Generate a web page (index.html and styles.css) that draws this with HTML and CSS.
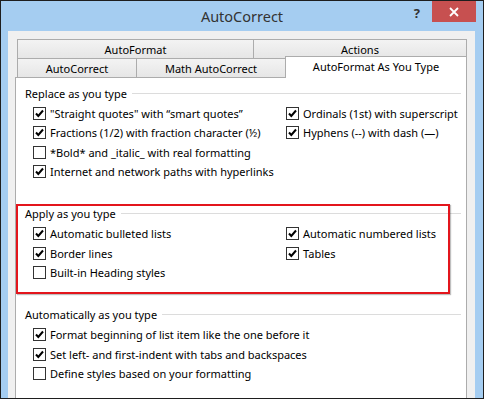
FILE: index.html
```html
<!DOCTYPE html>
<html lang="en">
<head>
  <meta charset="UTF-8">
  <title>AutoCorrect</title>
  <link rel="stylesheet" href="styles.css">
</head>
<body>
  <div class="window">
    <div class="titlebar">
      <span class="title">AutoCorrect</span>
      <div class="controls">
        <span class="help">?</span>
        <button class="close-btn" aria-label="Close">
          <svg width="10" height="10" viewBox="0 0 10 10"><path d="M1 1 L9 9 M9 1 L1 9" stroke="#fff" stroke-width="1.8" fill="none"/></svg>
        </button>
      </div>
    </div>

    <div class="client">
      <div class="tab-row">
        <div class="tab tab-autoformat">AutoFormat</div>
        <div class="tab tab-actions">Actions</div>
      </div>
      <div class="tab-row">
        <div class="tab tab-autocorrect">AutoCorrect</div>
        <div class="tab tab-math">Math AutoCorrect</div>
        <div class="tab tab-asyoutype selected">AutoFormat As You Type</div>
      </div>

      <div class="panel">
        <section class="group">
          <div class="group-title">Replace as you type</div>
          <div class="options">
            <label class="option"><span class="box"><svg viewBox="0 0 11 11"><path d="M2 5.5 L4.3 8 L9 2.5" /></svg></span>"Straight quotes" with “smart quotes”</label>
            <label class="option"><span class="box"><svg viewBox="0 0 11 11"><path d="M2 5.5 L4.3 8 L9 2.5" /></svg></span>Ordinals (1st) with superscript</label>
            <label class="option"><span class="box"><svg viewBox="0 0 11 11"><path d="M2 5.5 L4.3 8 L9 2.5" /></svg></span>Fractions (1/2) with fraction character (½)</label>
            <label class="option"><span class="box"><svg viewBox="0 0 11 11"><path d="M2 5.5 L4.3 8 L9 2.5" /></svg></span>Hyphens (--) with dash (—)</label>
            <label class="option"><span class="box"></span>*Bold* and _italic_ with real formatting</label>
            <span></span>
            <label class="option"><span class="box"><svg viewBox="0 0 11 11"><path d="M2 5.5 L4.3 8 L9 2.5" /></svg></span>Internet and network paths with hyperlinks</label>
          </div>
        </section>

        <section class="group highlight">
          <div class="group-title">Apply as you type</div>
          <div class="options">
            <label class="option"><span class="box"><svg viewBox="0 0 11 11"><path d="M2 5.5 L4.3 8 L9 2.5" /></svg></span>Automatic bulleted lists</label>
            <label class="option"><span class="box"><svg viewBox="0 0 11 11"><path d="M2 5.5 L4.3 8 L9 2.5" /></svg></span>Automatic numbered lists</label>
            <label class="option"><span class="box"><svg viewBox="0 0 11 11"><path d="M2 5.5 L4.3 8 L9 2.5" /></svg></span>Border lines</label>
            <label class="option"><span class="box"><svg viewBox="0 0 11 11"><path d="M2 5.5 L4.3 8 L9 2.5" /></svg></span>Tables</label>
            <label class="option"><span class="box"></span>Built-in Heading styles</label>
          </div>
        </section>

        <section class="group">
          <div class="group-title">Automatically as you type</div>
          <div class="options single">
            <label class="option"><span class="box"><svg viewBox="0 0 11 11"><path d="M2 5.5 L4.3 8 L9 2.5" /></svg></span>Format beginning of list item like the one before it</label>
            <label class="option"><span class="box"><svg viewBox="0 0 11 11"><path d="M2 5.5 L4.3 8 L9 2.5" /></svg></span>Set left- and first-indent with tabs and backspaces</label>
            <label class="option"><span class="box"></span>Define styles based on your formatting</label>
          </div>
        </section>
      </div>
    </div>
  </div>
</body>
</html>
```

FILE: styles.css
```css
* {
  box-sizing: border-box;
  margin: 0;
  padding: 0;
}

body {
  width: 484px;
  height: 399px;
  overflow: hidden;
  font-family: "Noto Sans", "Open Sans", sans-serif;
  font-size: 11px;
  color: #000;
}

.window {
  height: 399px;
  border: 1px solid #1e1e1e;
  background: #a5cdf1;
  display: flex;
  flex-direction: column;
  overflow: hidden;
}

/* Title bar */
.titlebar {
  height: 30px;
  flex: none;
  display: grid;
  grid-template-columns: 1fr auto 1fr;
}

.title {
  grid-column: 2;
  font-size: 14.5px;
  line-height: 30px;
  color: #333;
}

.controls {
  grid-column: 3;
  display: flex;
  justify-content: flex-end;
  align-items: flex-start;
  padding-right: 7px;
}

.help {
  font-size: 13px;
  font-weight: bold;
  line-height: 18px;
  color: #333;
  margin: 3px 12px 0 0;
}

.close-btn {
  width: 44px;
  height: 21px;
  border: none;
  background: #c75050;
  display: flex;
  align-items: center;
  justify-content: center;
}

/* Client area */
.client {
  flex: 1;
  margin: 0 8px 0 7px;
  padding: 8px 8px 0 7px;
  background: #f0f0f0;
  display: flex;
  flex-direction: column;
}

.tab-row {
  display: flex;
  align-items: flex-start;
  height: 19px;
  margin-left: 2px;
}

.tab {
  height: 19px;
  border: 1px solid #acacac;
  border-bottom: none;
  background: linear-gradient(#f3f3f3, #e6e6e6);
  text-align: center;
  line-height: 19px;
  white-space: nowrap;
}

.tab + .tab {
  margin-left: -1px;
}

.tab-autoformat { width: 237px; }
.tab-actions { width: 214px; }
.tab-autocorrect { width: 120px; }
.tab-math { width: 150px; }
.tab-asyoutype { width: 182px; }

.tab.selected {
  position: relative;
  z-index: 1;
  height: 22px;
  margin-top: -2px;
  background: #fff;
  line-height: 20px;
}

.panel {
  flex: 1;
  background: #fff;
  border: 1px solid #acacac;
  border-bottom: none;
  padding-top: 6px;
}

/* Groups */
.group {
  position: relative;
  margin-bottom: 23px;
}

.group-title {
  display: flex;
  align-items: center;
  height: 19px;
  padding: 0 5px 0 9px;
  color: #000;
}

.group-title::after {
  content: "";
  flex: 1;
  height: 1px;
  margin-left: 5px;
  background: #dcdcdc;
}

.group.highlight::before {
  content: "";
  position: absolute;
  left: 0;
  top: 0;
  width: 430px;
  height: 86px;
  border: 2px solid #e3151c;
  box-shadow: 1px 1px 1px rgba(0, 0, 0, 0.25);
}

.options {
  display: grid;
  grid-template-columns: 253px 1fr;
  grid-auto-rows: 19.3px;
  padding: 1px 0 0 17px;
}

.options.single {
  grid-template-columns: 1fr;
}

.option {
  display: flex;
  align-items: center;
  gap: 4px;
  white-space: nowrap;
}

.box {
  flex: none;
  width: 13px;
  height: 13px;
  border: 1px solid #333;
  background: #fff;
  display: flex;
  align-items: center;
  justify-content: center;
}

.box svg {
  width: 11px;
  height: 11px;
  fill: none;
  stroke: #000;
  stroke-width: 2;
}
```
